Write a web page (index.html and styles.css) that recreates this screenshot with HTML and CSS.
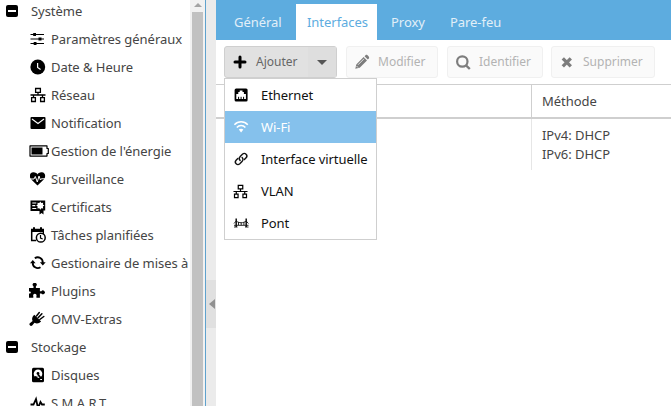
FILE: index.html
```html
<!DOCTYPE html>
<html lang="fr">
<head>
<meta charset="utf-8">
<title>Interfaces</title>
<link rel="stylesheet" href="styles.css">
</head>
<body>
<svg class="defs" width="0" height="0">
  <symbol id="network" viewBox="0 0 16 16"><path d="M5.600 1.500h4.800v3.800H5.600zM1.600 10.700h3.800v3.800H1.600zM10.600 10.700h3.800v3.800h-3.800zM8 5.300v2.700M.5 8h15M3.500 8v2.700M12.500 8v2.700" fill="none" stroke="currentColor" stroke-width="1.300"/></symbol>
  <symbol id="minus" viewBox="0 0 12 12"><rect width="12" height="12" rx="2" fill="#000"/><path d="M2 6h8" stroke="#fff" stroke-width="2"/></symbol>
</svg>
<div class="app">
  <nav class="sidebar">
    <div class="group"><svg class="toggle"><use href="#minus"/></svg>Système</div>
    <div class="item"><svg class="icon" viewBox="0 0 16 16"><path d="M.5 3.500h13.500M.5 8h13.500M.5 12.500h13.500" stroke="#000" stroke-width="1.100"/><path d="M3.200 2h2.800v3H3.200zM8.500 6.500h3v3h-3zM3.700 11h2.800v3H3.700z"/></svg>Paramètres généraux</div>
    <div class="item"><svg class="icon" viewBox="0 0 16 16"><circle cx="7.800" cy="8" r="7.400"/><path d="M7.600 4v4.400l3 2" fill="none" stroke="#fff" stroke-width="1.200"/></svg>Date &amp; Heure</div>
    <div class="item"><svg class="icon"><use href="#network"/></svg>Réseau</div>
    <div class="item"><svg class="icon" viewBox="0 0 16 16"><rect x=".5" y="2" width="15" height="12" rx="1"/><path d="M2 4l6 4.500L14 4" fill="none" stroke="#fff" stroke-width="1.100"/></svg>Notification</div>
    <div class="item"><svg class="icon battery" viewBox="0 0 20 16"><path d="M1 2.900h17v2.600h1.300v5H18v2.600H1z" fill="none" stroke="#000" stroke-width="1.200" stroke-linejoin="round"/><path d="M2.500 4.500H13.500v7H2.500z"/></svg>Gestion de l'énergie</div>
    <div class="item"><svg class="icon" viewBox="0 0 16 16"><path d="M7.500 14.500L1 8.200C-1 5.800-.5 1.500 3.200 1.300 5.400 1.200 7 2.300 7.500 3.400 8 2.300 9.600 1.200 11.800 1.300c3.700.2 4.200 4.500 2.200 6.900z"/><path d="M0 8h4l1.300-2.500 2 5.500L9 5l1.500 4 .8-1.200H15" fill="none" stroke="#fff" stroke-width="1"/></svg>Surveillance</div>
    <div class="item"><svg class="icon" viewBox="0 0 16 16"><path d="M.5 1.500h14.700v10H13.500v4l-1.900-1.500-2.100 1.500v-3.500H.5z"/><path d="M2.300 4h4M2.300 6.700h3M2.300 9.500h4" stroke="#fff" stroke-width="1.200"/><path d="M10.300 2.500l1 1.500 1.900-.3-.3 1.900 1.500 1-1.500 1 .3 1.900-1.900-.3-1 1.500-1-1.500-1.900.3.3-1.900-1.500-1 1.500-1-.3-1.900 1.900.3z" fill="#fff"/></svg>Certificats</div>
    <div class="item"><svg class="icon" viewBox="0 0 16 16"><path d="M1.700 2.500v11h4.500" fill="none" stroke="#000" stroke-width="1.500"/><path d="M1 1.700h2V.3h2v1.400h5V.3h2v1.400h2V5H1z"/><path d="M13.300 4v3" stroke="#000" stroke-width="1.400"/><circle cx="10.800" cy="10.700" r="4.400" fill="#fff" stroke="#000" stroke-width="1.500"/><path d="M10.500 8v3l2.200 1" fill="none" stroke="#000" stroke-width="1.200"/></svg>Tâches planifiées</div>
    <div class="item"><svg class="icon" viewBox="0 0 16 16"><path d="M4.800 3.300A5 5 0 0 1 12.700 8M10.500 12.300A5 5 0 0 1 2.800 7.500" fill="none" stroke="#000" stroke-width="1.800"/><path d="M9.900 7.300h5.800l-2.900 3.300zM0 8.200h5.600L2.800 4.900z"/></svg>Gestionaire de mises à</div>
    <div class="item"><svg class="icon puzzle" viewBox="0 0 16 16"><path d="M0 5h4.500V3.300a2 2 0 1 1 2.400 0V5h4v3.200h1.500a1.900 1.900 0 1 1 0 2.200h-1.500v4.300H7.400v-1.500a1.700 1.700 0 1 0-3.100 0v1.500H0v-4.200c2.400.5 2.400-2.500 0-2z"/></svg>Plugins</div>
    <div class="item"><svg class="icon plug" viewBox="0 0 16 16"><path d="M5.300 3.700l6.800 6.800c-2 2-4.300 2.600-6.600 1.300l-2.300 2.700c-1.600 1.300-3.700-.7-2.400-2.200L3.600 10C2.500 7.700 3.300 5.700 5.300 3.700z"/><path d="M7.500 5l2.800-3.500M10.800 8.500l4-3M9.100 6.700l3.800-4" stroke="#000" stroke-width="1.500" stroke-linecap="round"/></svg>OMV-Extras</div>
    <div class="group"><svg class="toggle"><use href="#minus"/></svg>Stockage</div>
    <div class="item"><svg class="icon" viewBox="0 0 16 16"><rect x="2" y=".7" width="12" height="14.600" rx="1.500"/><circle cx="8" cy="6.800" r="4.300" fill="#fff"/><circle cx="8" cy="6.500" r="1.400"/><path d="M4 12.500l1-3.500 3.500 1z"/><path d="M8 7.500l4 5" stroke="#000" stroke-width="1.800"/><path d="M10.200 12.500h1.800" stroke="#fff"/></svg>Disques</div>
    <div class="item"><svg class="icon" viewBox="0 0 16 16"><path d="M.5 9.500h3L6 4l2 9 2.500-6 1.500 2.500h2.800" fill="none" stroke="#000" stroke-width="1.800"/></svg>S.M.A.R.T.</div>
  </nav>
  <div class="scrollbar"><div class="arrow-up"></div><div class="thumb"></div></div>
  <div class="splitter"><div class="collapse"><span></span></div></div>
  <main class="panel">
    <div class="tabs"><div class="tab">Général</div><div class="tab active">Interfaces</div><div class="tab">Proxy</div><div class="tab">Pare-feu</div></div>
    <div class="toolbar">
      <div class="button add"><svg class="icon" viewBox="0 0 16 16"><path d="M8 3v10M3 8h10" stroke="#000" stroke-width="3" stroke-linecap="round"/></svg><span class="label">Ajouter</span><span class="split"><i></i></span>
        <div class="menu">
          <div class="option"><svg class="icon" viewBox="0 0 16 16"><rect x="1.600" y="1.500" width="13" height="13" rx="1.500"/><path d="M3.300 12V7h2V5h1.400V3.500h2.800V5h1.400v2h2v5z" fill="#fff"/><path d="M5.600 12V9.800M8.100 12V9.800M10.600 12V9.800" stroke="#000"/></svg>Ethernet</div>
          <div class="option selected"><svg class="icon" viewBox="0 0 16 16"><path d="M1.400 5.800c3.700-4 9.700-4 13.400 0M3.800 8.500c2.400-2.700 6.200-2.700 8.600 0" fill="none" stroke="#fff" stroke-width="1.500"/><path d="M5.800 10.600c1.500-1.300 3.100-1.300 4.600 0l-2.300 3z" fill="#fff"/></svg>Wi-Fi</div>
          <div class="option"><svg class="icon" viewBox="0 0 16 16"><g fill="none" stroke="#111" stroke-width="1.400" stroke-linecap="round"><path d="M7.100 9.500C5.800 8.200 6 6.800 7.200 5.600l2.200-2.300c2.500-2.400 6 1 3.700 3.500l-1.700 1.800"/><path d="M9.100 6.500c1.300 1.300 1.100 2.700-.1 3.900l-2.200 2.300c-2.500 2.400-6-1-3.700-3.500l1.700-1.800"/></g></svg>Interface virtuelle</div>
          <div class="option"><svg class="icon thin"><use href="#network"/></svg>VLAN</div>
          <div class="option"><svg class="icon" viewBox="0 0 16 16"><path d="M3.200 3.500v8.500M13.200 3.500v8.500" stroke="#111" stroke-width="1.500"/><path d="M1 8.500L3.200 6c3 2.300 7 2.300 10 0l2.200 2.500M1 10.300h14.500M1 12h3.500M12 12h3.500M5.500 7v3M8.200 7.500v2.700M10.900 7v3" fill="none" stroke="#111" stroke-width=".9"/></svg>Pont</div>
        </div>
      </div>
      <div class="button disabled edit"><svg class="icon" viewBox="0 0 16 16"><path d="M1.300 14.700l1-4.300 7.300-7.300 3.400 3.400-7.300 7.300zM10.500 2.200l1.300-1.200c1-.8 3.900 2 3.300 3.200l-1.300 1.300z" fill="#7d7d7d"/><path d="M4 10.800l6-6M2.500 12l1.500 1.500" stroke="#fafafa" stroke-width=".8"/></svg><span class="label">Modifier</span></div>
      <div class="button disabled identify"><svg class="icon" viewBox="0 0 16 16"><circle cx="7.300" cy="7.500" r="5.200" fill="none" stroke="#7d7d7d" stroke-width="2.200"/><path d="M11 11.400l3.800 3.600" stroke="#7d7d7d" stroke-width="2.400"/></svg><span class="label">Identifier</span></div>
      <div class="button disabled remove"><svg class="icon" viewBox="0 0 16 16"><path d="M3.800 4.300l8 8M11.800 4.300l-8 8" stroke="#7d7d7d" stroke-width="3.300"/></svg><span class="label">Supprimer</span></div>
    </div>
    <div class="grid">
      <div class="head"><div class="cell"></div><div class="cell">Méthode</div></div>
      <div class="row"><div class="cell"></div><div class="cell">IPv4: DHCP<br>IPv6: DHCP</div></div>
    </div>
  </main>
</div>
</body>
</html>
```
FILE: styles.css
```css
* { box-sizing: border-box; }
body { margin: 0; overflow: hidden; background: #fff; font: 13px/19px "Noto Sans", sans-serif; letter-spacing: -.04px; color: #454545; }
.defs { display: block; }
.app { display: flex; height: 406px; overflow: hidden; }
.sidebar { width: 190px; margin-top: -3px; overflow: hidden; flex: none; }
.group, .item { display: flex; align-items: center; height: 28px; white-space: nowrap; }
.group { padding-left: 6px; }
.toggle { width: 12px; height: 12px; margin-right: 13px; }
.item { padding-left: 30px; }
.icon { width: 16px; height: 16px; flex: none; color: #000; }
.item .icon { margin-right: 5px; }
.item .battery { width: 20px; margin: 0 2px 0 -1px; }
.item .puzzle, .item .plug { margin: 0 6px 0 -1px; }
.scrollbar { width: 15px; flex: none; padding: 3px 2px 0; background: #f1f1f1; }
.arrow-up { width: 0; margin: 0 auto; border: solid transparent; border-width: 0 4px 4px; border-bottom-color: #a3a3a3; }
.thumb { height: 394px; margin-top: 5px; background: #c1c1c1; }
.splitter { width: 11px; flex: none; background: #ebebeb; border-left: 1px solid #5fa2cd; padding-top: 280px; }
.collapse { height: 48px; background: #e0e0e0; display: flex; align-items: center; padding-left: 3px; }
.collapse span { border: solid transparent; border-width: 5px 6px 5px 0; border-right-color: #919191; }
.panel { flex: 1; min-width: 0; }
.tabs { display: flex; align-items: flex-end; height: 40px; padding-left: 4px; background: #5dacdf; }
.tab { height: 36px; padding: 9px 14px 0; color: #e2eff8; margin-right: -3px; }
.tab.active { width: 81px; padding-left: 11px; background: #fff; color: #5dacdf; margin-right: 0; }
.tab:first-child { width: 76px; margin: 0; }
.toolbar { display: flex; align-items: center; height: 44px; padding-left: 8px; }
.button { position: relative; display: flex; align-items: center; height: 32px; padding-left: 7px; border: 1px solid #cfcfcf; border-radius: 3px; background: #e1e1e1; color: #666; font-size: 12px; letter-spacing: 0; }
.button .label { margin: -1px 0 0 8px; }
.add { width: 113px; }
.split { margin-left: auto; width: 28px; height: 30px; padding: 13px 0 0 9px; background: #dedede; }
.split i { display: block; width: 0; border: solid transparent; border-width: 5px 5px 0; border-top-color: #555; }
.disabled { margin-left: 9px; background: #fafafa; border-color: #f0f0f0; color: #b3b3b3; }
.edit { width: 92px; }
.identify { width: 96px; }
.remove { width: 104px; margin-left: 8px; }
.menu { position: absolute; z-index: 2; top: 31px; left: -1px; width: 153px; height: 162px; background: #fff; border: 1px solid #cfcfcf; color: #111; font-size: 13px; letter-spacing: -.08px; }
.option { display: flex; align-items: center; height: 32px; padding-left: 8px; gap: 12px; white-space: nowrap; }
.selected { background: #85c1ec; color: #fff; }
.thin { width: 15px; height: 15px; margin-right: 1px; }
.grid { border-top: 1px solid #cfcfcf; }
.head, .row { display: grid; grid-template-columns: 316px 1fr; }
.head { height: 34px; border-bottom: 2px solid #cfcfcf; }
.cell { padding: 7px 10px 0; }
.cell:first-child { border-right: 1px solid #cfcfcf; }
.row { height: 51px; }
.row .cell:first-child { border-color: #e6e6e6; }
```
